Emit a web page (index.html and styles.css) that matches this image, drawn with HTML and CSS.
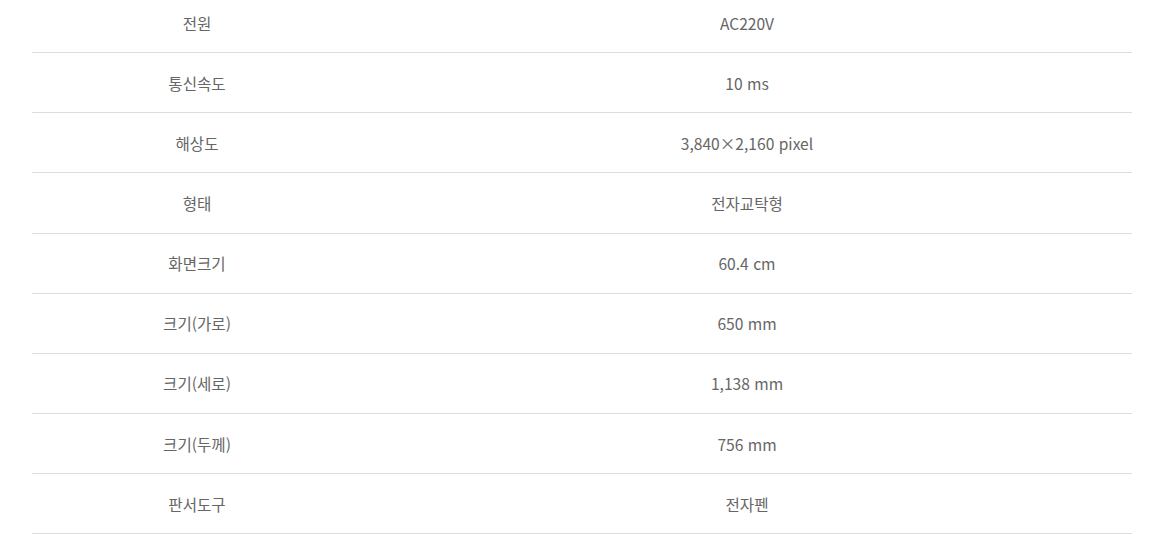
FILE: index.html
```html
<!DOCTYPE html>
<html lang="ko">
<head>
<meta charset="utf-8">
<link rel="stylesheet" href="styles.css">
</head>
<body>
<div class="spec">
  <div class="row"><div class="th">전원</div><div class="td">AC220V</div></div>
  <div class="row"><div class="th">통신속도</div><div class="td">10 ms</div></div>
  <div class="row"><div class="th">해상도</div><div class="td">3,840×2,160 pixel</div></div>
  <div class="row"><div class="th">형태</div><div class="td">전자교탁형</div></div>
  <div class="row"><div class="th">화면크기</div><div class="td">60.4 cm</div></div>
  <div class="row"><div class="th">크기(가로)</div><div class="td">650 mm</div></div>
  <div class="row"><div class="th">크기(세로)</div><div class="td">1,138 mm</div></div>
  <div class="row"><div class="th">크기(두께)</div><div class="td">756 mm</div></div>
  <div class="row"><div class="th">판서도구</div><div class="td">전자펜</div></div>
</div>
</body>
</html>
```
FILE: styles.css
```css
html, body {
  margin: 0;
  padding: 0;
  background: #fff;
}
body {
  font-family: "Noto Sans CJK KR", "Noto Sans", sans-serif;
  font-size: 15.6px;
  color: #666;
}
.spec {
  width: 1100px;
  margin: -6.92px 0 0 32px;
}
.row {
  display: grid;
  grid-template-columns: 330px 770px;
  height: 59.125px;
  border-bottom: 1px solid #ddd;
  align-items: center;
  text-align: center;
}
```
